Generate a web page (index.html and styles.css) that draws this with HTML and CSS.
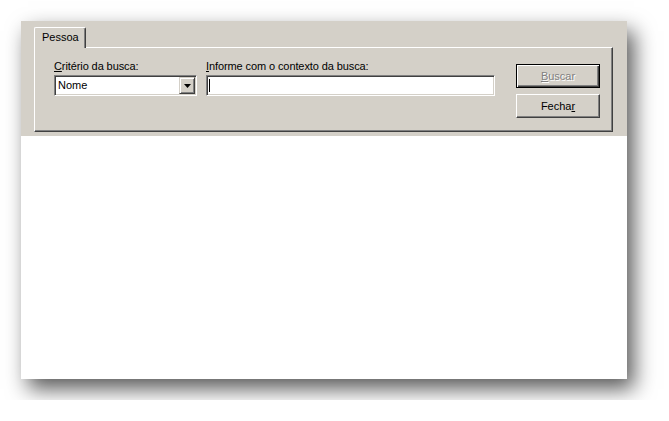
FILE: index.html
```html
<!DOCTYPE html>
<html>
<head>
<meta charset="utf-8">
<link rel="stylesheet" href="styles.css">
</head>
<body>
<div class="window">
  <div class="top">
    <div class="tabs">
      <div class="tab">Pessoa</div>
    </div>
    <div class="panel">
      <div class="field combo-field">
        <label class="label"><u>C</u>ritério da busca:</label>
        <div class="combo">
          <span class="combo-text">Nome</span>
          <span class="combo-btn"><svg width="7" height="4" viewBox="0 0 7 4"><path d="M0 0h7L3.5 4z" fill="#000"/></svg></span>
        </div>
      </div>
      <div class="field input-field">
        <label class="label"><u>I</u>nforme com o contexto da busca:</label>
        <div class="input"><span class="caret"></span></div>
      </div>
      <div class="buttons">
        <div class="btn default disabled"><span><u>B</u>uscar</span></div>
        <div class="btn">Fecha<u>r</u></div>
      </div>
    </div>
  </div>
  <div class="body"></div>
</div>
</body>
</html>
```

FILE: styles.css
```css
html, body {
  margin: 0;
  background: #ffffff;
}
body {
  padding: 21px;
  font-family: "Liberation Sans", Arial, sans-serif;
  font-size: 11px;
  color: #000;
}
.window {
  width: 606px;
  height: 358px;
  background: #ffffff;
  box-shadow: 7px 10px 20px rgba(0, 0, 0, 0.65);
  display: flex;
  flex-direction: column;
}
.top {
  background: #d4d0c8;
  height: 115px;
  box-sizing: border-box;
  padding: 6px 14px 0 13px;
}
.tabs {
  display: flex;
  height: 20px;
  position: relative;
  z-index: 1;
}
.tab {
  box-sizing: border-box;
  width: 52px;
  height: 21px;
  background: #d4d0c8;
  border-top: 1px solid #ffffff;
  border-left: 1px solid #ffffff;
  border-right: 1px solid #404040;
  box-shadow: inset -1px 0 0 #808080;
  border-top-left-radius: 2px;
  border-top-right-radius: 2px;
  padding: 3px 0 0 7px;
  line-height: 13px;
}
.panel {
  box-sizing: border-box;
  height: 85px;
  border-top: 1px solid #ffffff;
  border-left: 1px solid #ffffff;
  border-right: 1px solid #404040;
  border-bottom: 1px solid #404040;
  box-shadow: inset -1px -1px 0 #808080;
  display: flex;
  padding: 12px 12px 0 19px;
}
.field {
  display: flex;
  flex-direction: column;
}
.label {
  line-height: 13px;
  height: 15px;
  letter-spacing: -0.1px;
}
.combo-field {
  width: 143px;
}
.input-field {
  width: 289px;
  margin-left: 9px;
}
.combo, .input {
  box-sizing: border-box;
  height: 21px;
  background: #ffffff;
  border-top: 1px solid #808080;
  border-left: 1px solid #808080;
  border-right: 1px solid #ffffff;
  border-bottom: 1px solid #ffffff;
  box-shadow: inset 1px 1px 0 #404040, inset -1px -1px 0 #d4d0c8;
  display: flex;
  align-items: center;
}
.combo-text {
  flex: 1;
  padding-left: 3px;
  line-height: 13px;
}
.combo-btn {
  box-sizing: border-box;
  width: 16px;
  height: 17px;
  margin-right: 1px;
  background: #d4d0c8;
  border-top: 1px solid #d4d0c8;
  border-left: 1px solid #d4d0c8;
  border-right: 1px solid #404040;
  border-bottom: 1px solid #404040;
  box-shadow: inset 1px 1px 0 #ffffff, inset -1px -1px 0 #808080;
  display: flex;
  align-items: center;
  justify-content: center;
}
.caret {
  display: block;
  width: 1px;
  height: 13px;
  margin-left: 2px;
  background: #000;
}
.buttons {
  margin-left: auto;
  margin-top: 4px;
  display: flex;
  flex-direction: column;
  gap: 6px;
}
.btn {
  box-sizing: border-box;
  width: 84px;
  height: 24px;
  background: #d4d0c8;
  border-top: 1px solid #ffffff;
  border-left: 1px solid #ffffff;
  border-right: 1px solid #404040;
  border-bottom: 1px solid #404040;
  box-shadow: inset -1px -1px 0 #808080;
  display: flex;
  align-items: center;
  justify-content: center;
  line-height: 13px;
}
.btn.default {
  border: 1px solid #000;
  box-shadow: inset 1px 1px 0 #ffffff, inset -1px -1px 0 #404040, inset -2px -2px 0 #808080;
}
.btn.disabled {
  color: #808080;
  text-shadow: 1px 1px 0 #ffffff;
}
.body {
  flex: 1;
  background: #ffffff;
}
```
